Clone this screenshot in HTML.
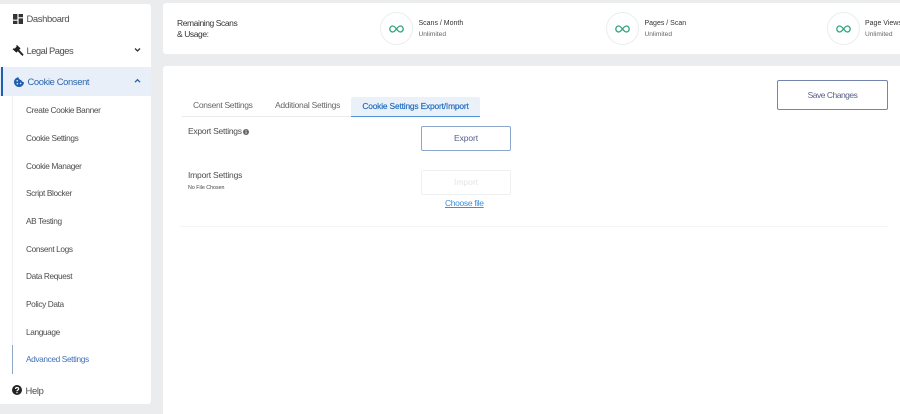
<!DOCTYPE html>
<html>
<head>
<meta charset="utf-8">
<style>
html,body{margin:0;padding:0;width:900px;height:414px;overflow:hidden;background:#eaeced;font-family:"Liberation Sans",sans-serif;}
body{position:relative;}
#w{position:absolute;left:0;top:0;width:900px;height:414px;filter:blur(.3px);}
.a{position:absolute;white-space:nowrap;}
.panel{position:absolute;background:#fff;}
.sub{position:absolute;left:26px;font-size:8.3px;letter-spacing:-.38px;color:#4d4d4d;white-space:nowrap;line-height:10px;}
.circle{position:absolute;width:31px;height:31px;border:1px solid #e6efec;border-radius:50%;background:#fff;}
.lab{position:absolute;font-size:7px;color:#333;white-space:nowrap;line-height:9px;}
.val{position:absolute;font-size:6.6px;color:#666;white-space:nowrap;line-height:9px;}
</style>
</head>
<body>
<div id="w">
<!-- sidebar -->
<div class="panel" style="left:0;top:4px;width:151px;height:400px;border-radius:0 3px 3px 0;"></div>
<div class="a" style="left:0;top:67px;width:151px;height:29px;background:#e8eff8;"></div>
<div class="a" style="left:1px;top:67px;width:2px;height:29px;background:#1f5fae;"></div>
<div class="a" style="left:12px;top:96px;width:1px;height:278px;background:#eef0f2;"></div>
<div class="a" style="left:12px;top:345px;width:1px;height:29px;background:#8fa6c8;"></div>

<svg class="a" style="left:13px;top:14px" width="10" height="10" viewBox="0 0 10 10"><path fill="#333" d="M0 0h4.4v5.6H0zM5.6 0H10v3.2H5.6zM5.6 4.4H10V10H5.6zM0 6.8h4.4V10H0z"/></svg>
<div class="a" style="left:26.5px;top:13px;font-size:9.4px;letter-spacing:-.35px;line-height:11px;color:#4d4d4d;">Dashboard</div>

<svg class="a" style="left:12px;top:45px" width="12" height="11" viewBox="0 0 12 11"><path fill="#222" d="M5 0l3.6 3.4-1.4 1.4L11.6 9.6 10.4 11 5.8 6.2 4.4 7.6 0.6 4.2 1.6 3.2 2.6 3.6 4.6 1.6 4.2.8z"/></svg>
<div class="a" style="left:26.5px;top:45px;font-size:9.4px;letter-spacing:-.5px;line-height:11px;color:#4d4d4d;">Legal Pages</div>
<svg class="a" style="left:134px;top:47px" width="7" height="6" viewBox="0 0 7 6"><path fill="none" stroke="#333" stroke-width="1.3" d="M1 1.5l2.500 2.500L6 1.500"/></svg>

<svg class="a" style="left:14px;top:77px" width="10" height="10" viewBox="0 0 10 10"><path fill="#1f5fae" d="M4.500.2C2 .4 0 2.500 0 5c0 2.800 2.200 5 5 5s5-2.200 5-4.800C8.600 5 7.500 4.400 7.200 3 5.800 2.900 4.600 1.700 4.500.2z"/><circle cx="3.200" cy="3.800" r=".8" fill="#e8eff8"/><circle cx="3.400" cy="6.800" r=".8" fill="#e8eff8"/><circle cx="6.600" cy="6.400" r=".8" fill="#e8eff8"/></svg>
<div class="a" style="left:27.500px;top:76px;font-size:9.400px;letter-spacing:-.36px;line-height:11px;color:#2a66ae;">Cookie Consent</div>
<svg class="a" style="left:134px;top:78px" width="7" height="6" viewBox="0 0 7 6"><path fill="none" stroke="#2a5f9f" stroke-width="1.300" d="M1 4.200l2.500-2.500L6 4.200"/></svg>

<div class="sub" style="top:105px;">Create Cookie Banner</div>
<div class="sub" style="top:133px;">Cookie Settings</div>
<div class="sub" style="top:161px;">Cookie Manager</div>
<div class="sub" style="top:188px;">Script Blocker</div>
<div class="sub" style="top:216px;">AB Testing</div>
<div class="sub" style="top:244px;">Consent Logs</div>
<div class="sub" style="top:271px;">Data Request</div>
<div class="sub" style="top:299px;">Policy Data</div>
<div class="sub" style="top:327px;">Language</div>
<div class="sub" style="top:354px;color:#3f72b5;">Advanced Settings</div>

<svg class="a" style="left:12px;top:385px" width="10" height="10" viewBox="0 0 10 10"><circle cx="5" cy="5" r="5" fill="#222"/><path fill="none" stroke="#fff" stroke-width="1.200" d="M3.500 4c0-2 3.200-2 3.200-.1 0 1.100-1.700 1.100-1.700 2.300"/><rect x="4.400" y="7" width="1.200" height="1.200" fill="#fff"/></svg>
<div class="a" style="left:25.500px;top:385px;font-size:9.400px;letter-spacing:-.3px;line-height:11px;color:#4d4d4d;">Help</div>

<!-- top bar -->
<div class="panel" style="left:163px;top:3px;width:737px;height:51px;border-radius:3px 0 0 3px;"></div>
<div class="a" style="left:177px;top:18px;font-size:8.500px;letter-spacing:-.42px;line-height:10.500px;color:#333;">Remaining Scans<br>&amp; Usage:</div>

<div class="circle" style="left:380px;top:12px;"></div>
<svg class="a" style="left:389px;top:25px" width="15" height="8" viewBox="0 0 15 8"><path fill="none" stroke="#2fa37c" stroke-width="1.300" d="M7.500 4C6 6 5 7 3.600 7 2 7 .8 5.600 .8 4S2 1 3.600 1C5 1 6 2 7.500 4S10 7 11.400 7C13 7 14.200 5.600 14.200 4S13 1 11.400 1C10 1 9 2 7.500 4z"/></svg>
<div class="lab" style="left:418.500px;top:18.500px;">Scans / Month</div>
<div class="val" style="left:418.500px;top:30px;">Unlimited</div>

<div class="circle" style="left:606px;top:12px;"></div>
<svg class="a" style="left:614.500px;top:25px" width="15" height="8" viewBox="0 0 15 8"><path fill="none" stroke="#2fa37c" stroke-width="1.300" d="M7.500 4C6 6 5 7 3.600 7 2 7 .8 5.600 .8 4S2 1 3.600 1C5 1 6 2 7.500 4S10 7 11.400 7C13 7 14.200 5.600 14.200 4S13 1 11.400 1C10 1 9 2 7.500 4z"/></svg>
<div class="lab" style="left:644.500px;top:18.500px;">Pages / Scan</div>
<div class="val" style="left:644.500px;top:30px;">Unlimited</div>

<div class="circle" style="left:827px;top:12px;"></div>
<svg class="a" style="left:835.500px;top:25px" width="15" height="8" viewBox="0 0 15 8"><path fill="none" stroke="#2fa37c" stroke-width="1.300" d="M7.500 4C6 6 5 7 3.600 7 2 7 .8 5.600 .8 4S2 1 3.600 1C5 1 6 2 7.500 4S10 7 11.400 7C13 7 14.200 5.600 14.200 4S13 1 11.400 1C10 1 9 2 7.500 4z"/></svg>
<div class="lab" style="left:865px;top:18.500px;">Page Views</div>
<div class="val" style="left:865px;top:30px;">Unlimited</div>

<!-- main -->
<div class="panel" style="left:163px;top:66px;width:737px;height:348px;border-radius:3px 0 0 0;"></div>

<div class="a" style="left:777px;top:80px;width:109px;height:28px;border:1px solid #7584ad;border-radius:2px;text-align:center;line-height:28px;font-size:8.500px;letter-spacing:-.5px;color:#56618a;">Save Changes</div>

<div class="a" style="left:182px;top:116px;width:298px;height:1px;background:#e8ecef;"></div>
<div class="a" style="left:193px;top:100px;font-size:8.500px;letter-spacing:-.32px;line-height:11px;color:#666;">Consent Settings</div>
<div class="a" style="left:275px;top:100px;font-size:8.500px;letter-spacing:-.28px;line-height:11px;color:#666;">Additional Settings</div>
<div class="a" style="left:351px;top:97px;width:129px;height:19px;background:#ebf1f8;border-bottom:1px solid #4f93d8;border-radius:2px 2px 0 0;text-align:center;font-size:8.400px;letter-spacing:-.17px;line-height:18px;color:#2470c2;-webkit-text-stroke:.2px #2470c2;">Cookie Settings Export/Import</div>

<div class="a" style="left:188px;top:126px;font-size:8.500px;letter-spacing:-.26px;line-height:11px;color:#4d4d4d;">Export Settings</div>
<svg class="a" style="left:243px;top:129px" width="6" height="6" viewBox="0 0 6 6"><circle cx="3" cy="3" r="3" fill="#666"/><rect x="2.600" y="2.500" width=".8" height="2.200" fill="#fff"/><rect x="2.600" y="1.200" width=".8" height=".8" fill="#fff"/></svg>

<div class="a" style="left:421px;top:126px;width:88px;height:23px;border:1px solid #8ba7cb;border-radius:2px;text-align:center;line-height:23px;font-size:8.500px;letter-spacing:-.1px;color:#56618a;">Export</div>

<div class="a" style="left:188px;top:170px;font-size:8.500px;letter-spacing:-.2px;line-height:11px;color:#4d4d4d;">Import Settings</div>
<div class="a" style="left:188px;top:184px;font-size:5.300px;line-height:8px;color:#444;">No File Chosen</div>

<div class="a" style="left:421px;top:170px;width:88px;height:23px;border:1px solid #eef0f2;border-radius:2px;text-align:center;line-height:23px;font-size:8.500px;color:#e3e5e8;">Import</div>
<div class="a" style="left:445px;top:198px;font-size:8.500px;letter-spacing:-.35px;line-height:11px;color:#3d8fdc;text-decoration:underline;">Choose file</div>

<div class="a" style="left:180px;top:226px;width:708px;height:1px;background:#f4f5f6;"></div>
</div>
</body>
</html>
